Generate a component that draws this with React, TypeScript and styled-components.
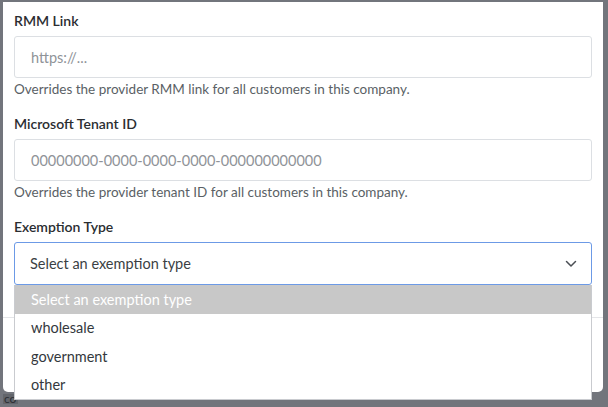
import React from "react";
import styled, { createGlobalStyle } from "styled-components";

const Global = createGlobalStyle`
  html, body { margin: 0; padding: 0; }
  body {
    width: 608px;
    height: 407px;
    overflow: hidden;
    background: #72757c;
    font-family: "Lato", "Noto Sans", sans-serif;
  }
`;

const Backdrop = styled.div`
  width: 608px;
  height: 407px;
  box-sizing: border-box;
  padding: 2px 5px 0 3px;
  display: flex;
  flex-direction: column;
  background: #72757c;
`;

const Modal = styled.div`
  background: #ffffff;
  height: 390px;
  border-radius: 0 0 5px 5px;
  box-sizing: border-box;
  padding: 9px 11px 0 11px;
  display: flex;
  flex-direction: column;
`;

const Field = styled.div<{ $gap?: number }>`
  display: flex;
  flex-direction: column;
  margin-bottom: ${(p) => p.$gap ?? 0}px;
  position: relative;
`;

const Label = styled.label`
  font-size: 14px;
  font-weight: 600;
  color: #2a2d31;
  line-height: 20px;
  margin-bottom: 5px;
`;

const Input = styled.div`
  height: 42px;
  box-sizing: border-box;
  border: 1px solid #dcdfe3;
  border-radius: 3px;
  display: flex;
  align-items: center;
  padding: 0 16px;
  font-size: 14.5px;
  color: #8f9398;
`;

const Help = styled.div`
  font-size: 13.5px;
  color: #5a5f65;
  line-height: 18px;
  margin-top: 2px;
`;

const Select = styled.div`
  height: 43px;
  box-sizing: border-box;
  border: 1.5px solid #6c9ae6;
  border-radius: 3px;
  display: flex;
  align-items: center;
  justify-content: space-between;
  padding: 0 14px 0 15px;
  font-size: 14.5px;
  color: #3b3f44;
`;

const Menu = styled.ul`
  position: absolute;
  left: 0;
  right: 0;
  top: 100%;
  margin: 0;
  padding: 0;
  list-style: none;
  background: #fff;
  border: 1px solid #c9cbcf;
  border-top: none;
  z-index: 5;
`;

const Option = styled.li<{ $active?: boolean }>`
  height: 28.5px;
  display: flex;
  align-items: center;
  padding-left: 16px;
  font-size: 14.5px;
  color: ${(p) => (p.$active ? "#ffffff" : "#34383d")};
  background: ${(p) => (p.$active ? "#c8c8c8" : "transparent")};
`;

const Divider = styled.div`
  margin: 32px -11px 0;
  border-top: 1px solid #e4e5e8;
`;

const Under = styled.div`
  align-self: flex-start;
  font-size: 12px;
  line-height: 10px;
  color: #2b2e33;
  background: #62656b;
  padding: 0 2px 0 1px;
  margin-top: 2px;
`;

const Chevron = () => (
  <svg width="12" height="8" viewBox="0 0 12 8" fill="none">
    <path d="M1.5 1.5 L6 6 L10.5 1.5" stroke="#4a4e54" strokeWidth="1.5" strokeLinecap="round" strokeLinejoin="round" />
  </svg>
);

export default function App() {
  return (
    <>
      <Global />
      <Backdrop>
        <Modal>
          <Field $gap={16}>
            <Label>RMM Link</Label>
            <Input>https://...</Input>
            <Help>Overrides the provider RMM link for all customers in this company.</Help>
          </Field>
          <Field $gap={16}>
            <Label>Microsoft Tenant ID</Label>
            <Input>00000000-0000-0000-0000-000000000000</Input>
            <Help>Overrides the provider tenant ID for all customers in this company.</Help>
          </Field>
          <Field>
            <Label>Exemption Type</Label>
            <Select>
              <span>Select an exemption type</span>
              <Chevron />
            </Select>
            <Menu>
              <Option $active>Select an exemption type</Option>
              <Option>wholesale</Option>
              <Option>government</Option>
              <Option>other</Option>
            </Menu>
          </Field>
          <Divider />
        </Modal>
        <Under>co</Under>
      </Backdrop>
    </>
  );
}
